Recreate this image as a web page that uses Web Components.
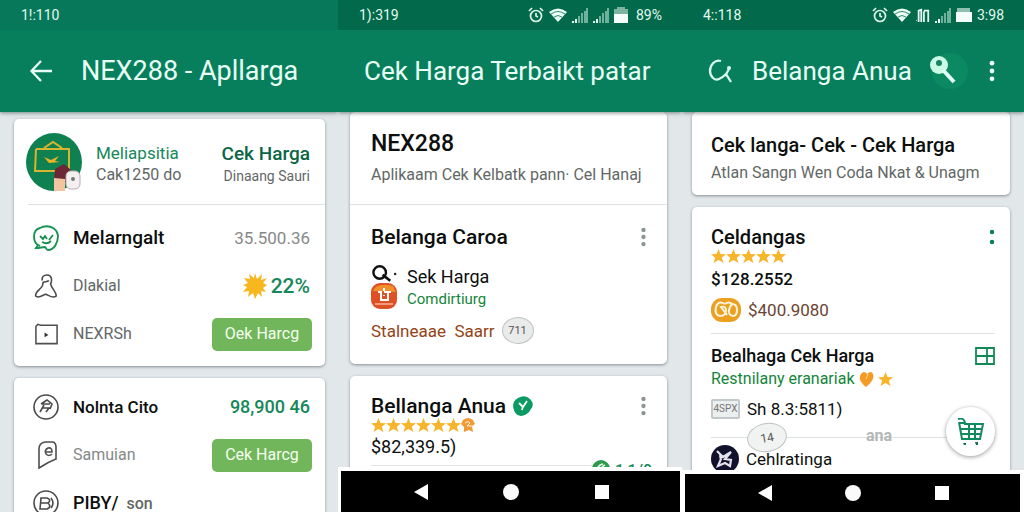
<!DOCTYPE html>
<html lang="id">
<head>
<meta charset="utf-8">
<meta name="viewport" content="width=device-width, initial-scale=1">
<title>NEX288 - Cek Harga</title>
<style>
html, body { margin: 0; height: 100%; }
body { font-family: Roboto, "Noto Sans", sans-serif; background: #e2e7ea; color: #0c0f0e; overflow: hidden; }
</style>
</head>
<body>
<price-app></price-app>

<script>
const ICONS = {
  back: ['0 0 24 24', '<path d="M23 12H3M12 2L2.500 12l9.500 10" fill="none" stroke="#e9fff6" stroke-width="2.3"/>'],
  refresh: ['0 0 24 26', '<path d="M13 3C7 1 2 7 2 13c0 6 5 10 9 8 3-1 5-3 7-5l5 8M17 18l4-7" fill="none" stroke="#d9fbee" stroke-width="2.3"/><circle cx="21" cy="10" r="2" fill="#d9fbee"/>'],
  key: ['0 0 40 40', '<circle cx="22" cy="20" r="18" fill="#0b8a61"/><circle cx="11" cy="14" r="9" fill="#c9fbe6"/><circle cx="11" cy="12" r="3" fill="#188263"/><path d="M15 19l11 12" stroke="#e4fff6" stroke-width="4"/>'],
  dots: ['0 0 6 24', '<g fill="currentColor"><circle cx="3" cy="3.500" r="2.600"/><circle cx="3" cy="12" r="2.600"/><circle cx="3" cy="20.500" r="2.600"/></g>'],
  dots2: ['0 0 6 24', '<g fill="#0b7f55"><circle cx="3" cy="6" r="2.700"/><circle cx="3" cy="18" r="2.700"/></g>'],
  alarm: ['0 0 16 16', '<g fill="none" stroke="#dcf5ea" stroke-width="1.7"><circle cx="8" cy="9" r="5.500"/><path d="M1 4l3-3M12 1l3 3M8 6v3l2 1"/></g>'],
  wifi: ['0 0 18 14', '<path d="M0 4Q9-3 18 4L9 14z" fill="#e9fff6"/><path d="M2 6q7-5 14 0M5 9q4-3 8 0" fill="none" stroke="#07694b" stroke-width=".8"/>'],
  signal: ['0 0 16 15', '<path d="M1 15v-2M4 15v-4" stroke="#e9fff6" stroke-width="2"/><path d="M7 15V8M10 15V5M13 15V3M15 15V0" stroke="#7bb9a3" stroke-width="1.8"/>'],
  bars: ['0 0 16 15', '<path d="M3 15V2l3-1v14M9 15V3M9 2h5v13" fill="none" stroke="#e9fff6" stroke-width="2"/><path d="M0 13h1" stroke="#e9fff6"/>'],
  battery: ['0 0 14 16', '<path d="M0 2h3V0h8v2h3v6H0z" fill="#7eb5a2"/><path d="M0 7h14v9H0z" fill="#f4fffb"/>'],
  folderStat: ['0 0 16 16', '<path d="M1 5V1h13v4z" fill="#8fbfae"/><path d="M0 5h16v10H0z" fill="#f4fffb"/>'],
  avatar: ['0 0 56 58', '<ellipse cx="28" cy="29" rx="28" ry="29" fill="#0f8150"/><path d="M10 16h33v22M10 16l-1 22H29M8 38h20M18 15l9-6 9 6" fill="none" stroke="#d8b52f" stroke-width="2"/><path d="M18 24l7 3 8-4-4 5 5 1-11 1z" fill="#e8b624"/><path d="M29 36l9-5 7 6 1 12H28z" fill="#6c2635"/><path d="M28 45l11 1v12H28z" fill="#f2c5a0"/><rect x="40" y="38" width="14" height="18" rx="5" fill="#f4f0f0" stroke="#b9adb0"/><circle cx="47" cy="46" r="2" fill="#777"/>'],
  chat: ['0 0 26 26', '<path d="M7 21C-1 18-1 5 7 3c7-4 17-1 18 8 0 7-4 14-10 14-2 0-2-3-3-3-3 0-5 1-9 1l2-3" fill="none" stroke="#179452" stroke-width="1.900"/><path d="M7 11l3 3 2-3 2 3M16 15l4-5M9 17q5 3 9-1" fill="none" stroke="#14904e" stroke-width="1.800"/>'],
  person: ['0 0 26 26', '<path d="M9 7C8 3 11 1 14 1c5 0 6 5 4 10 1 5 7 9 6 13-4 3-8-1-11-2-3 0-7 5-11 2C0 20 7 17 9 13l1-4c2-1 5 0 6-2" fill="none" stroke="#4a4a4a" stroke-width="1.700"/>'],
  folder: ['0 0 26 22', '<path d="M2 3l2-2 3 1h17v19H2z" fill="none" stroke="#4f4f4f" stroke-width="1.600"/><path d="M11 9.500l4 2.500-4 2.500z" fill="#333"/>'],
  badgeR: ['0 0 26 26', '<g fill="none" stroke="#4a4a4a" stroke-width="1.600"><circle cx="13" cy="13" r="12"/><path d="M8 10l6-4 5 4-2 5M9 10h8M11 11l-4 7M10 14h6l-3 4"/></g>'],
  ticket: ['0 0 26 28', '<g fill="none" stroke="#4f4f4f" stroke-width="1.600"><path d="M6 27V8q0-6 6-7h8q3 1 3 5v12q-8 3-17 9z"/><path d="M13 11h6q0-5-4-4-4 2-2 6 3 3 6 0"/></g>'],
  badgeB: ['0 0 26 26', '<g fill="none" stroke="#4a4a4a" stroke-width="1.600"><circle cx="13" cy="13" r="12"/><path d="M8 8h6q5 2 1 5 4 4-1 6H7zM8 13h7M18 8q4 5 0 10"/></g>'],
  sun: ['0 0 24 26', '<path d="M12 0l2 6 5-5-1 6 6-2-4 5 4 2-4 3 3 4-5-1 1 6-4-4-3 6-2-6-5 4 1-6-6 1 4-5-4-2 5-2-4-5 6 1-1-5 5 4z" fill="#f8b61f"/>'],
  search: ['0 0 28 17', '<circle cx="9" cy="7.500" r="6.500" fill="none" stroke="#101010" stroke-width="2.500"/><path d="M12 10l8 6" stroke="#101010" stroke-width="2.800"/><circle cx="25" cy="9" r="1.300" fill="#222"/>'],
  shop: ['0 0 26 26', '<rect width="26" height="26" rx="9" fill="#df5025"/><path d="M2 8q4-9 20-5l3 6z" fill="#f0902d"/><path d="M7 9h3v8h7V9h-4M17 9h3M13 5v3M13 12v1" fill="none" stroke="#fff" stroke-width="2"/><path d="M4 21h18" stroke="#f3b59c" stroke-width="1.500"/>'],
  star: ['0 0 15 14', '<path d="M7.500 0l2 5 5.500.3-4.200 3.400L12.500 14l-5-3-5 3 1.700-5.300L0 5.300 5.500 5z" fill="#f7b52c"/>'],
  medal: ['0 0 14 14', '<path d="M2 2q5-4 10 0l2 4-3 2 1 6-4-2-5 2V9L0 6z" fill="#f09a38"/><path d="M4 5q3-3 5 0l-3 3h5" fill="none" stroke="#fff0dc"/>'],
  verified: ['0 0 20 20', '<path d="M5 2q7-4 12 1 5 5 1 10-3 6-10 7-6-1-7-6-3-8 4-12z" fill="#0b9a62"/><path d="M6 7l4 4 4-6M10 10l-1 4" fill="none" stroke="#fff" stroke-width="1.800"/>'],
  coin: ['0 0 30 24', '<rect width="30" height="24" rx="11" fill="#eba022"/><path d="M14 6Q7 2 5 9q-2 8 4 9 6 0 6-6 0-4-5-3l6 8M14 6q4-3 7 0 5 0 5 6t-4 6q-5-1-4-6 1-4 3-6" fill="none" stroke="#fff5df" stroke-width="2"/>'],
  heart: ['0 0 15 16', '<path d="M2 3q3-4 6 0 4-4 6 0 2 6-7 13Q-2 9 2 3z" fill="#f49b25"/><path d="M9 3L7 8" stroke="#ffd27d"/>'],
  grid: ['0 0 20 18', '<path d="M1 1h18v16H1zM1 9h18M12 1v16" fill="none" stroke="#138a56" stroke-width="1.800"/>'],
  orb: ['0 0 28 28', '<circle cx="14" cy="14" r="14" fill="#12112b"/><path d="M6 6l6 6 8-5-6 7 6 1-1 6-5-3-7 3 3-7M9 10l1 5" fill="none" stroke="#e4e1ee" stroke-width="2.200"/>'],
  cart: ['0 0 27 28', '<g fill="none" stroke="#128a60" stroke-width="2"><path d="M1 1q6-2 7 4L2 5M7 6h19l-3 15H5L2 4M4 11h20M5 16h18M12 6v14M18 6v14"/></g><path d="M6 25h3v2H7zM18 24h3v3h-2z" fill="#12714f"/>'],
  leaf: ['0 0 18 18', '<circle cx="9" cy="9" r="9" fill="#2f9a4b"/><path d="M5 12q0-7 6-8M9 11q0-4 4-6" fill="none" stroke="#e5ffe9" stroke-width="1.700"/>'],
  navBack: ['0 0 14 16', '<path d="M14 0v16L0 8z" fill="#fff"/>'],
  navHome: ['0 0 16 16', '<circle cx="8" cy="8" r="8" fill="#fafafa"/>'],
  navRecent: ['0 0 16 16', '<path d="M1 1h14v14H1z" fill="#fff"/>']
};

function define(name, html) {
  const template = document.createElement('template');
  template.innerHTML = html;
  customElements.define(name, class extends HTMLElement {
    constructor() {
      super();
      this.attachShadow({ mode: 'open' }).append(template.content.cloneNode(true));
    }
  });
}

/* <ui-icon name="star" w="15" h="14"> draws one glyph from ICONS */
customElements.define('ui-icon', class extends HTMLElement {
  connectedCallback() {
    if (this.shadowRoot) return;
    const [box, art] = ICONS[this.getAttribute('name')];
    const w = this.getAttribute('w'), h = this.getAttribute('h');
    this.attachShadow({ mode: 'open' }).innerHTML =
      `<style>:host{display:inline-flex;flex:none}svg{display:block}</style>
       <svg width="${w}" height="${h}" viewBox="${box}" aria-hidden="true">${art}</svg>`;
  }
});

/* row of rating stars */
customElements.define('star-rating', class extends HTMLElement {
  connectedCallback() {
    if (this.shadowRoot) return;
    const count = Number(this.getAttribute('value'));
    this.attachShadow({ mode: 'open' }).innerHTML =
      `<style>:host{display:flex;height:13px;gap:var(--star-gap,0px)}</style>` +
      '<ui-icon name="star" w="15" h="14"></ui-icon>'.repeat(count) + '<slot></slot>';
  }
});

define('icon-button', `
<style>
:host { display: inline-flex; flex: none; }
button { display: flex; align-items: center; justify-content: center; border: 0; padding: 0; margin: 0; background: none; color: inherit; cursor: pointer; }
</style><button type="button" aria-label="Menu"><slot></slot></button>`);

define('status-bar', `
<style>
:host { display: flex; align-items: center; height: 30px; box-sizing: border-box; padding: 0 20px 0 21px; background: var(--status, #02694a); color: #e4faf1; font-size: 14px; line-height: 20px; }
.side { display: flex; align-items: center; gap: 5px; margin-left: auto; }
</style><slot name="time"></slot><div class="side"><slot></slot></div>`);

define('app-bar', `
<style>
:host { display: flex; align-items: center; height: 82px; box-sizing: border-box; color: #e9fff6; padding: 0 29px 0 26px; }
h1 { margin: 0; font-size: var(--title-size, 26px); line-height: 32px; font-weight: 400; white-space: nowrap; }
</style><slot name="lead"></slot><h1><slot></slot></h1><slot name="trail"></slot>`);

define('phone-screen', `
<style>
:host { display: flex; flex-direction: column; min-width: 0; height: 100vh; overflow: hidden; position: relative; }
header { flex: none; background: #077f5c; box-shadow: 0 1px 4px rgba(30,50,45,.55); position: relative; z-index: 1; }
main { flex: 1; min-height: 0; overflow: hidden; display: flex; flex-direction: column; gap: 12px; padding: var(--body-pad); }
</style>
<header><slot name="header"></slot></header><main><slot></slot></main><slot name="nav"></slot>`);

define('nav-bar', `
<style>
:host { display: block; flex: none; background: #fff; padding: 4px var(--nav-edge, 2px) 0 3px; z-index: 1; }
nav { display: flex; align-items: center; justify-content: space-between; background: #000; height: var(--nav-h, 41px); padding: 0 70px 0 73px; }
</style>
<nav>
<icon-button><ui-icon name="navBack" w="14" h="16"></ui-icon></icon-button>
<icon-button><ui-icon name="navHome" w="16" h="16"></ui-icon></icon-button>
<icon-button><ui-icon name="navRecent" w="16" h="16"></ui-icon></icon-button>
</nav>`);

define('info-card', `
<style>
:host { display: block; flex: none; background: #fff; border-radius: 5px; box-shadow: 0 1px 3px rgba(40,55,60,.5); position: relative; }
</style><slot></slot>`);

define('list-row', `
<style>
:host { display: flex; align-items: center; height: 48px; padding: 0 15px 0 19px; }
.icon { width: 26px; display: flex; justify-content: center; margin-right: 14px; flex: none; }
.end { margin-left: auto; display: flex; align-items: center; gap: 4px; }
.end ::slotted(price-button) { margin-right: -2px; }
</style>
<div class="icon"><slot name="icon"></slot></div><slot></slot><div class="end"><slot name="end"></slot></div>`);

define('price-button', `
<style>
:host { display: block; }
button { width: 100px; height: 33px; border: 0; border-radius: 5px; padding: 0; background: #72b65b; color: #f5fff0; font: inherit; font-size: 16px; line-height: 20px; }
</style><button type="button"><slot></slot></button>`);

define('price-app', `
<style>
:host { display: grid; grid-template-columns: 338fr 344fr 342fr; height: 100vh; }
.one { --body-pad: 7px 13px 0 14px; --status: #07795a; --title-size: 27px; }
.two { --body-pad: 0 15px 0 12px; }
.three { --body-pad: 0 14px 0 10px; --nav-h: 38px; --nav-edge: 4px; }
h2, p { margin: 0; white-space: nowrap; }
h2 { font-weight: 500; }
.s14 { font-size: 14px; line-height: 20px; }
.s15 { font-size: 15px; line-height: 20px; }
.s16 { font-size: 16px; line-height: 22px; }
.s17 { font-size: 17px; line-height: 22px; }
.s18 { font-size: 18px; line-height: 24px; }
.s19 { font-size: 19px; line-height: 24px; }
.s20 { font-size: 20px; line-height: 28px; }
.s21 { font-size: 21px; line-height: 28px; }
.s23 { font-size: 23px; line-height: 28px; }
.tight { line-height: 24px; }
.mid { font-weight: 500; }
.green { color: #15875a; }
.leaf { color: #14853a; }
.deep { color: #0b6545; }
.gray { color: #626766; }
.pale { color: #858988; }
.brown { color: #934416; }
.rust { color: #6b4433; }
.row { display: flex; align-items: center; gap: 7px; }
.between { display: flex; justify-content: space-between; align-items: center; }
.lead-back { margin-right: 28px; margin-left: 3px; }
.lead-refresh { margin-right: 20px; }
.key { margin-left: 16px; }
.push { margin-left: auto; }
.profile { display: flex; align-items: center; gap: 14px; height: 85px; padding: 0 15px 0 12px; box-sizing: border-box; }
.profile .right { margin-left: auto; text-align: right; }
.profile .txt { padding-top: 4px; }
hr { margin: 0; border: 0; height: 1px; background: #dfe2e2; }
.indent { margin-left: 14px; }
.rows { padding: 9px 0 8px; }
.rows2 { padding: 5px 0; }
.sec { padding: 18px 21px; }
.sub { padding-top: 6px; }
.media { display: flex; gap: 9px; padding-top: 14px; }
.icons { display: flex; flex-direction: column; gap: 1px; width: 27px; }
.extra { padding: 8px 0 2px; }
.chip { display: inline-flex; align-items: center; justify-content: center; box-sizing: border-box; background: #e9eaea; border: 1px solid #bfc3c3; border-radius: 50%; color: #555; font-size: 11px; line-height: 14px; }
.c1 { width: 32px; height: 27px; }
.dots { color: #8b9393; }
.list { padding: 18px 15px 20px 19px; }
.head { padding: 19px 19px 11px; }
.head .gray { padding-top: 3px; }
.price { padding: 6px 0 8px; }
.split { margin: 11px 0 10px; }
.rate { gap: 4px; padding-bottom: 8px; }
.note { box-sizing: border-box; width: 29px; height: 20px; border: 2px solid #c3c9cb; border-radius: 2px; color: #777; background: #eceff0; font-size: 10px; line-height: 16px; text-align: center; }
.rule { position: relative; margin: 17px 0 7px; }
.c2 { position: absolute; left: 36px; top: -14px; width: 40px; height: 29px; transform: rotate(-10deg); background: #f1f2f2; font-size: 12px; z-index: 1; }
.smear { position: absolute; left: 155px; top: -10px; color: #b3b7b7; font-size: 16px; line-height: 18px; font-weight: 700; }
.fab { position: absolute; right: 29px; bottom: 56px; z-index: 1; width: 49px; height: 49px; border-radius: 50%; background: #fff; box-shadow: 0 1px 4px rgba(0,0,0,.4); align-items: center; justify-content: center; }
.peek { position: relative; padding-top: 6px; }
.peek .tag { position: absolute; right: -6px; top: 1px; display: flex; gap: 5px; background: #fff; }
.stars2 { padding-bottom: 4px; }
</style>

<phone-screen class="one">
  <div slot="header">
    <status-bar><span slot="time">1!:110</span></status-bar>
    <app-bar><icon-button slot="lead" class="lead-back"><ui-icon name="back" w="24" h="24"></ui-icon></icon-button>NEX288 - Apllarga</app-bar>
  </div>
  <info-card>
    <div class="profile">
      <ui-icon name="avatar" w="56" h="58"></ui-icon>
      <div class="txt"><p class="s17 green">Meliapsitia</p><p class="s16 gray">Cak1250 do</p></div>
      <div class="right txt"><p class="s19 mid deep">Cek Harga</p><p class="s14 gray">Dinaang Sauri</p></div>
    </div>
    <hr class="indent">
    <div class="rows">
      <list-row><ui-icon slot="icon" name="chat" w="26" h="26"></ui-icon><h2 class="s19">Melarngalt</h2><span slot="end" class="s17 pale">35.500.36</span></list-row>
      <list-row><ui-icon slot="icon" name="person" w="24" h="26"></ui-icon><p class="s16 gray">Dlakial</p><ui-icon slot="end" name="sun" w="24" h="26"></ui-icon><span slot="end" class="s21 mid green">22%</span></list-row>
      <list-row><ui-icon slot="icon" name="folder" w="25" h="22"></ui-icon><p class="s16 gray">NEXRSh</p><price-button slot="end">Oek Harcg</price-button></list-row>
    </div>
  </info-card>
  <info-card>
    <div class="rows2">
      <list-row><ui-icon slot="icon" name="badgeR" w="26" h="26"></ui-icon><p class="s17 mid">Nolnta Cito</p><span slot="end" class="s18 mid green">98,900 46</span></list-row>
      <list-row><ui-icon slot="icon" name="ticket" w="26" h="28"></ui-icon><p class="s16 pale">Samuian</p><price-button slot="end">Cek Harcg</price-button></list-row>
      <list-row><ui-icon slot="icon" name="badgeB" w="26" h="26"></ui-icon><p class="s18 mid">PIBY/<span class="s16 gray">&nbsp; son</span></p></list-row>
    </div>
  </info-card>
</phone-screen>

<phone-screen class="two">
  <div slot="header">
    <status-bar><span slot="time">1):319</span>
      <ui-icon name="alarm" w="16" h="16"></ui-icon><ui-icon name="wifi" w="18" h="14"></ui-icon><ui-icon name="signal" w="16" h="15"></ui-icon><ui-icon name="signal" w="16" h="15"></ui-icon><ui-icon name="battery" w="14" h="16"></ui-icon><span>&nbsp;89%</span>
    </status-bar>
    <app-bar>Cek Harga Terbaikt patar</app-bar>
  </div>
  <info-card>
    <div class="sec"><h2 class="s23">NEX288</h2><p class="s16 gray sub">Aplikaam Cek Kelbatk pann· Cel Hanaj</p></div>
    <hr>
    <div class="sec">
      <div class="between"><h2 class="s21">Belanga Caroa</h2><icon-button class="dots"><ui-icon name="dots" w="5" h="20"></ui-icon></icon-button></div>
      <div class="media">
        <div class="icons"><ui-icon name="search" w="28" h="17"></ui-icon><ui-icon name="shop" w="26" h="26"></ui-icon></div>
        <div><p class="s18">Sek Harga</p><p class="s15 leaf">Comdirtiurg</p></div>
      </div>
      <div class="row extra"><p class="s17 brown">Stalneaae&nbsp; Saarr</p><span class="chip c1">711</span></div>
    </div>
  </info-card>
  <info-card>
    <div class="sec">
      <div class="between"><div class="row"><h2 class="s21 tight">Bellanga Anua</h2><ui-icon name="verified" w="20" h="20"></ui-icon></div><icon-button class="dots"><ui-icon name="dots" w="5" h="20"></ui-icon></icon-button></div>
      <star-rating class="stars2" value="6"><ui-icon name="medal" w="14" h="14"></ui-icon></star-rating>
      <p class="s18">$82,339.5)</p>
      <div class="peek"><hr><div class="tag"><ui-icon name="leaf" w="18" h="18"></ui-icon><span class="s16 green mid">1,1/0</span></div></div>
    </div>
  </info-card>
  <nav-bar slot="nav"></nav-bar>
</phone-screen>

<phone-screen class="three">
  <div slot="header">
    <status-bar><span slot="time">4::118</span>
      <ui-icon name="alarm" w="16" h="16"></ui-icon><ui-icon name="wifi" w="18" h="14"></ui-icon><ui-icon name="bars" w="14" h="15"></ui-icon><ui-icon name="signal" w="16" h="15"></ui-icon><ui-icon name="folderStat" w="16" h="16"></ui-icon><span>3:98</span>
    </status-bar>
    <app-bar><icon-button slot="lead" class="lead-refresh"><ui-icon name="refresh" w="24" h="26"></ui-icon></icon-button>Belanga Anua<icon-button slot="trail" class="key"><ui-icon name="key" w="40" h="40"></ui-icon></icon-button><icon-button slot="trail" class="push"><ui-icon name="dots" w="6" h="22"></ui-icon></icon-button></app-bar>
  </div>
  <info-card>
    <div class="head"><h2 class="s20">Cek langa- Cek - Cek Harga</h2><p class="s16 gray">Atlan Sangn Wen Coda Nkat &amp; Unagm</p></div>
  </info-card>
  <info-card>
    <div class="list">
      <div class="between"><h2 class="s20 tight">Celdangas</h2><icon-button><ui-icon name="dots2" w="6" h="20"></ui-icon></icon-button></div>
      <star-rating value="5"></star-rating>
      <p class="s17 mid price">$128.2552</p>
      <div class="row"><ui-icon name="coin" w="30" h="24"></ui-icon><p class="s17 rust">$400.9080</p></div>
      <hr class="split">
      <div class="between"><h2 class="s18">Bealhaga Cek Harga</h2><ui-icon name="grid" w="20" h="18"></ui-icon></div>
      <div class="row rate"><p class="s16 leaf">Restnilany eranariak</p><ui-icon name="heart" w="15" h="16"></ui-icon><ui-icon name="star" w="15" h="14"></ui-icon></div>
      <div class="row"><span class="note">4SPX</span><p class="s17">Sh 8.3:5811)</p></div>
      <div class="rule"><hr><span class="chip c2">14</span><span class="smear">ana</span></div>
      <div class="row"><ui-icon name="orb" w="28" h="28"></ui-icon><p class="s17">Cehlratinga</p></div>
    </div>
  </info-card>
  <nav-bar slot="nav"></nav-bar>
  <icon-button slot="nav" class="fab"><ui-icon name="cart" w="27" h="28"></ui-icon></icon-button>
</phone-screen>`);
</script>
</body>
</html>
